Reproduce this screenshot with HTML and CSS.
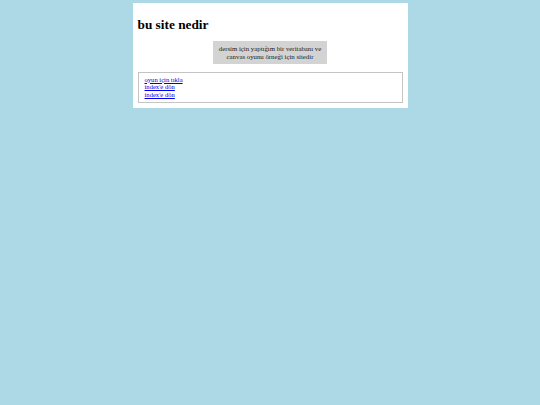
FILE: index.html
```html
<!DOCTYPE html>
<html lang="tr">
<head>
  <meta charset="UTF-8">
  <title>bu site nedir</title>
  <link rel="stylesheet" href="styles.css">
</head>
<body>
  <!-- Ana kutu -->
  <div class="page">
    <h1>bu site nedir</h1>

    <div class="about">dersim için yaptığım bir veritabanı ve canvas oyunu örneği için sitedir</div>

    <!-- Linkler -->
    <div class="links">
      <a href="oyun.html">oyun için tıkla</a><br>
      <a href="index.html">index'e dön</a><br>
      <a href="index.html">index'e dön</a>
    </div>
  </div>
</body>
</html>
```

FILE: styles.css
```css
body {
  margin: 0;
  background-color: #add8e6;
  font-family: "Liberation Serif", "Times New Roman", serif;
}

.page {
  width: 265px;
  margin: 3px auto 0;
  padding: 5px 5px 5px;
  background-color: #fff;
}

h1 {
  font-size: 13.3px;
  margin: 9px 0 8px;
  color: #000;
}

.about {
  width: 104px;
  margin: 0 auto;
  padding: 3.5px 5px;
  background-color: #d3d3d3;
  font-size: 6.8px;
  line-height: 8px;
  text-align: center;
  color: #222;
}

.links {
  margin-top: 8px;
  padding: 2.5px 6px 3.5px;
  border: 1px solid #c4c4c4;
  font-size: 6.6px;
  line-height: 7.5px;
}

.links a {
  color: #0000ee;
}
```
